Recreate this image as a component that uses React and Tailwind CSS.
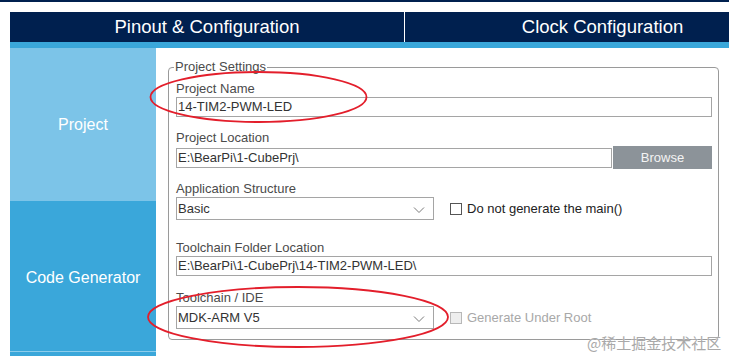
import React from "react";

const font = { fontFamily: '"Liberation Sans", Arial, sans-serif' };

const Chevron = () => (
  <svg width="12" height="8" viewBox="0 0 12 8" className="absolute right-[8px] top-[8px]">
    <path d="M1 1.5 L6 6.5 L11 1.5" fill="none" stroke="#7a7a7a" strokeWidth="1" />
  </svg>
);

const Label = ({ children, className = "" }) => (
  <div className={`h-[16px] text-[13px] leading-[16px] text-[#4b4b4b] ${className}`}>{children}</div>
);

const TextInput = ({ value, className = "" }) => (
  <div className={`h-[20px] border border-[#a5a5a5] bg-white pl-[1px] text-[13px] leading-[18px] text-[#333] ${className}`}>
    {value}
  </div>
);

const Select = ({ value }) => (
  <div className="relative h-[23px] w-[258px] border border-[#a5a5a5] bg-white pl-[1px] text-[13px] leading-[21px] text-[#333]">
    {value}
    <Chevron />
  </div>
);

const Check = ({ label, disabled }) => (
  <div className="ml-[16px] flex items-center gap-[5px]">
    <div
      className={`h-[12px] w-[12px] border ${
        disabled ? "border-[#b8b8b8] bg-[#eeeeee]" : "border-[#555] bg-white"
      }`}
    />
    <span className={`text-[13px] ${disabled ? "text-[#a8a8a8]" : "text-[#222]"}`}>{label}</span>
  </div>
);

export default function App() {
  return (
    <div className="relative h-[356px] w-[729px] overflow-hidden bg-white" style={font}>
      <div className="h-[2px] bg-[#00204f]" />
      <div className="h-[10px]" />

      <div className="ml-[10px] flex h-[30px] bg-[#00204f] text-[18.5px] leading-[30px] text-white">
        <div className="w-[395px] shrink-0 border-r border-white text-center">Pinout &amp; Configuration</div>
        <div className="w-[395px] shrink-0 text-center">Clock Configuration</div>
      </div>
      <div className="ml-[10px] h-[6px] bg-[#3aa7da]" />

      <div className="ml-[10px] flex">
        <div className="w-[146px] shrink-0 text-white">
          <div className="flex h-[153px] items-center justify-center bg-[#7cc4e8] text-[16px]">Project</div>
          <div className="flex h-[150px] items-center justify-center bg-[#3aa7da] pt-[3px] text-[16px]">Code Generator</div>
          <div className="h-[1px] bg-[#8ccdec]" />
          <div className="h-[10px] bg-[#3aa7da]" />
        </div>

        <div className="flex-1 pl-[12px] pt-[12px]">
          <fieldset className="h-[280px] w-[551px] rounded-[4px] border border-[#9a9a9a] pl-[7px] pr-[6px]">
            <legend className="ml-[-2px] px-[1px] text-[13px] leading-[14px] text-[#4b4b4b]">Project Settings</legend>

            <Label className="mt-[7px]">Project Name</Label>
            <TextInput value="14-TIM2-PWM-LED" />

            <Label className="mt-[13px]">Project Location</Label>
            <div className="flex items-center">
              <TextInput value="E:\BearPi\1-CubePrj\" className="w-[436px]" />
              <div className="ml-[1px] flex h-[23px] flex-1 items-center justify-center bg-[#8c9399] text-[13px] text-[#f4f4f4]">
                Browse
              </div>
            </div>

            <Label className="mt-[12px]">Application Structure</Label>
            <div className="flex items-center">
              <Select value="Basic" />
              <Check label="Do not generate the main()" />
            </div>

            <Label className="mt-[20px]">Toolchain Folder Location</Label>
            <TextInput value="E:\BearPi\1-CubePrj\14-TIM2-PWM-LED\" />

            <Label className="mt-[14px]">Toolchain / IDE</Label>
            <div className="flex items-center">
              <Select value="MDK-ARM V5" />
              <Check label="Generate Under Root" disabled />
            </div>
          </fieldset>
        </div>
      </div>

      <svg className="pointer-events-none absolute left-0 top-0" width="729" height="356">
        <ellipse cx="258.5" cy="97" rx="108" ry="25" fill="none" stroke="#e31e2b" strokeWidth="1.8" />
        <ellipse cx="298" cy="317" rx="150" ry="30" fill="none" stroke="#e31e2b" strokeWidth="1.8" />
      </svg>

      <div
        className="pointer-events-none absolute left-[587px] top-[333px] text-[15px] leading-[20px] text-[#a9a9a9]"
        style={{ fontFamily: '"Noto Sans CJK SC", sans-serif', textShadow: "0 0 1px #fff" }}
      >
        @稀土掘金技术社区
      </div>
    </div>
  );
}
